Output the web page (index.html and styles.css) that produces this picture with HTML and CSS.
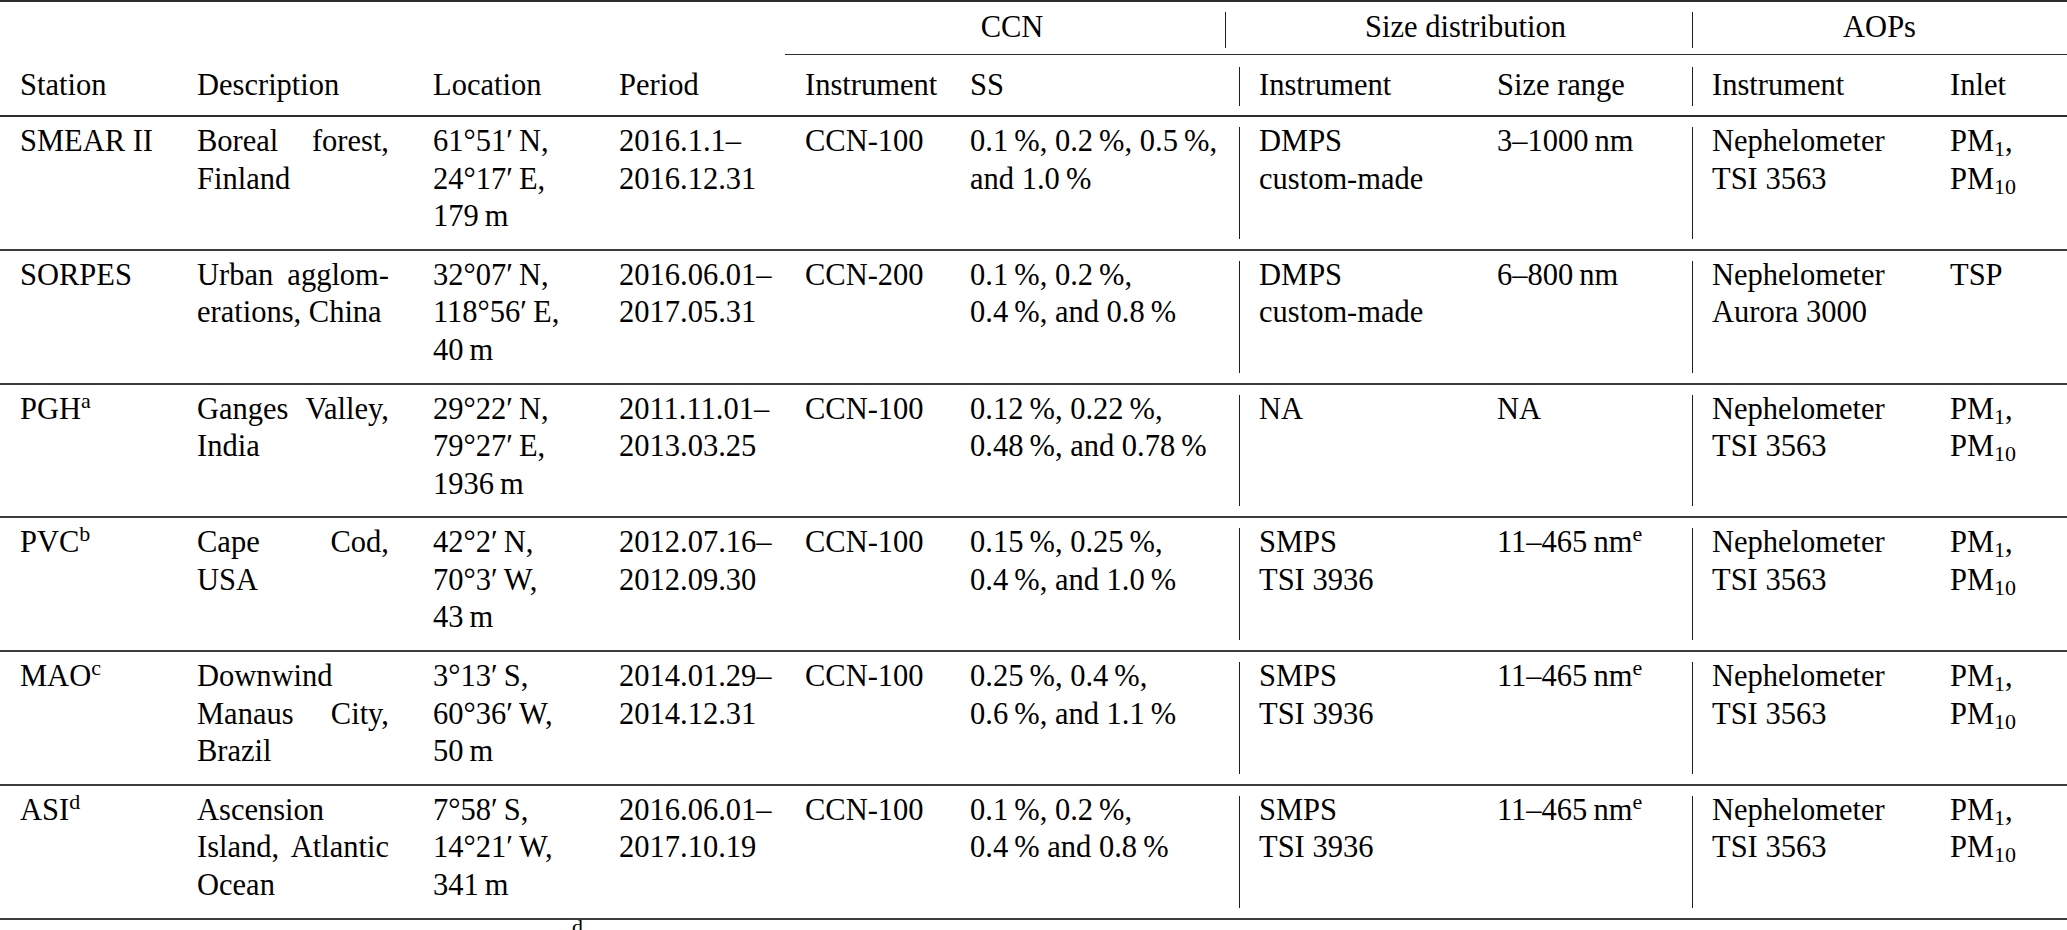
FILE: index.html
```html
<!DOCTYPE html>
<html lang="en">
<head>
<meta charset="utf-8">
<title>Stations table</title>
<link rel="stylesheet" href="styles.css">
</head>
<body>
<table class="tbl">
  <colgroup>
    <col class="c1"><col class="c2"><col class="c3"><col class="c4"><col class="c5">
    <col class="c6"><col class="c7"><col class="c8"><col class="c9"><col class="c10">
  </colgroup>
  <thead>
    <tr class="h1">
      <th></th><th></th><th></th><th></th>
      <th colspan="2" class="grp ccn">CCN</th>
      <th colspan="2" class="grp">Size distribution</th>
      <th colspan="2" class="grp bar">AOPs</th>
    </tr>
    <tr class="h2">
      <th>Station</th><th>Description</th><th>Location</th><th>Period</th>
      <th>Instrument</th><th>SS</th>
      <th class="bar b1">Instrument</th><th>Size range</th>
      <th class="bar b2">Instrument</th><th>Inlet</th>
    </tr>
  </thead>
  <tbody class="body">
    <tr>
      <td>SMEAR II</td>
      <td><span class="ln j"><span>Boreal</span><span>forest,</span></span><span class="ln">Finland</span></td>
      <td><span class="ln">61°51′&#8201;N,</span><span class="ln">24°17′&#8201;E,</span><span class="ln">179&#8201;m</span></td>
      <td><span class="ln">2016.1.1–</span><span class="ln">2016.12.31</span></td>
      <td>CCN-100</td>
      <td><span class="ln">0.1&#8201;%, 0.2&#8201;%, 0.5&#8201;%,</span><span class="ln">and 1.0&#8201;%</span></td>
      <td class="bar b1"><span class="ln">DMPS</span><span class="ln">custom-made</span></td>
      <td>3–1000&#8201;nm</td>
      <td class="bar b2"><span class="ln">Nephelometer</span><span class="ln">TSI 3563</span></td>
      <td><span class="ln">PM<sub>1</sub>,</span><span class="ln">PM<sub>10</sub></span></td>
    </tr>
    <tr>
      <td>SORPES</td>
      <td><span class="ln j"><span>Urban</span><span>agglom-</span></span><span class="ln">erations, China</span></td>
      <td><span class="ln">32°07′&#8201;N,</span><span class="ln">118°56′&#8201;E,</span><span class="ln">40&#8201;m</span></td>
      <td><span class="ln">2016.06.01–</span><span class="ln">2017.05.31</span></td>
      <td>CCN-200</td>
      <td><span class="ln">0.1&#8201;%, 0.2&#8201;%,</span><span class="ln">0.4&#8201;%, and 0.8&#8201;%</span></td>
      <td class="bar b1"><span class="ln">DMPS</span><span class="ln">custom-made</span></td>
      <td>6–800&#8201;nm</td>
      <td class="bar b2"><span class="ln">Nephelometer</span><span class="ln">Aurora 3000</span></td>
      <td>TSP</td>
    </tr>
    <tr>
      <td>PGH<sup>a</sup></td>
      <td><span class="ln j"><span>Ganges</span><span>Valley,</span></span><span class="ln">India</span></td>
      <td><span class="ln">29°22′&#8201;N,</span><span class="ln">79°27′&#8201;E,</span><span class="ln">1936&#8201;m</span></td>
      <td><span class="ln">2011.11.01–</span><span class="ln">2013.03.25</span></td>
      <td>CCN-100</td>
      <td><span class="ln">0.12&#8201;%, 0.22&#8201;%,</span><span class="ln">0.48&#8201;%, and 0.78&#8201;%</span></td>
      <td class="bar b1">NA</td>
      <td>NA</td>
      <td class="bar b2"><span class="ln">Nephelometer</span><span class="ln">TSI 3563</span></td>
      <td><span class="ln">PM<sub>1</sub>,</span><span class="ln">PM<sub>10</sub></span></td>
    </tr>
    <tr>
      <td>PVC<sup>b</sup></td>
      <td><span class="ln j"><span>Cape</span><span>Cod,</span></span><span class="ln">USA</span></td>
      <td><span class="ln">42°2′&#8201;N,</span><span class="ln">70°3′&#8201;W,</span><span class="ln">43&#8201;m</span></td>
      <td><span class="ln">2012.07.16–</span><span class="ln">2012.09.30</span></td>
      <td>CCN-100</td>
      <td><span class="ln">0.15&#8201;%, 0.25&#8201;%,</span><span class="ln">0.4&#8201;%, and 1.0&#8201;%</span></td>
      <td class="bar b1"><span class="ln">SMPS</span><span class="ln">TSI 3936</span></td>
      <td>11–465&#8201;nm<sup>e</sup></td>
      <td class="bar b2"><span class="ln">Nephelometer</span><span class="ln">TSI 3563</span></td>
      <td><span class="ln">PM<sub>1</sub>,</span><span class="ln">PM<sub>10</sub></span></td>
    </tr>
    <tr>
      <td>MAO<sup>c</sup></td>
      <td><span class="ln">Downwind</span><span class="ln j"><span>Manaus</span><span>City,</span></span><span class="ln">Brazil</span></td>
      <td><span class="ln">3°13′&#8201;S,</span><span class="ln">60°36′&#8201;W,</span><span class="ln">50&#8201;m</span></td>
      <td><span class="ln">2014.01.29–</span><span class="ln">2014.12.31</span></td>
      <td>CCN-100</td>
      <td><span class="ln">0.25&#8201;%, 0.4&#8201;%,</span><span class="ln">0.6&#8201;%, and 1.1&#8201;%</span></td>
      <td class="bar b1"><span class="ln">SMPS</span><span class="ln">TSI 3936</span></td>
      <td>11–465&#8201;nm<sup>e</sup></td>
      <td class="bar b2"><span class="ln">Nephelometer</span><span class="ln">TSI 3563</span></td>
      <td><span class="ln">PM<sub>1</sub>,</span><span class="ln">PM<sub>10</sub></span></td>
    </tr>
    <tr>
      <td>ASI<sup>d</sup></td>
      <td><span class="ln">Ascension</span><span class="ln j"><span>Island,</span><span>Atlantic</span></span><span class="ln">Ocean</span></td>
      <td><span class="ln">7°58′&#8201;S,</span><span class="ln">14°21′&#8201;W,</span><span class="ln">341&#8201;m</span></td>
      <td><span class="ln">2016.06.01–</span><span class="ln">2017.10.19</span></td>
      <td>CCN-100</td>
      <td><span class="ln">0.1&#8201;%, 0.2&#8201;%,</span><span class="ln">0.4&#8201;% and 0.8&#8201;%</span></td>
      <td class="bar b1"><span class="ln">SMPS</span><span class="ln">TSI 3936</span></td>
      <td>11–465&#8201;nm<sup>e</sup></td>
      <td class="bar b2"><span class="ln">Nephelometer</span><span class="ln">TSI 3563</span></td>
      <td><span class="ln">PM<sub>1</sub>,</span><span class="ln">PM<sub>10</sub></span></td>
    </tr>
  </tbody>
</table>
<div class="notes"><sup>d</sup></div>
</body>
</html>
```

FILE: styles.css
```css
html, body {
  margin: 0;
  padding: 0;
  background: #ffffff;
}

body {
  color: #000000;
  font-family: "Liberation Serif", "Times New Roman", serif;
  font-size: 30.5px;
  overflow: hidden;
}

.tbl {
  width: 2067px;
  table-layout: fixed;
  border-collapse: separate;
  border-spacing: 0;
  border-top: 2px solid #2e2e2e;
}

.c1 { width: 177px; }
.c2 { width: 236px; }
.c3 { width: 186px; }
.c4 { width: 186px; }
.c5 { width: 165px; }
.c6 { width: 289px; }
.c7 { width: 238px; }
.c8 { width: 215px; }
.c9 { width: 238px; }
.c10 { width: 137px; }

.tbl th,
.tbl td {
  padding: 0 0 0 20px;
  text-align: left;
  font-weight: normal;
  vertical-align: top;
  line-height: 37.5px;
  white-space: nowrap;
  position: relative;
}

.ln {
  display: block;
}

.ln.j {
  display: flex;
  justify-content: space-between;
  width: 192px;
}

.h1 th {
  padding-top: 7px;
  padding-bottom: 7px;
}

.h1 .grp {
  text-align: center;
  padding-left: 0;
  border-bottom: 1.5px solid #2e2e2e;
}

.h2 th {
  padding-top: 12px;
  padding-bottom: 11px;
  border-bottom: 2px solid #2e2e2e;
}

.body td {
  padding-top: 6px;
  padding-bottom: 13.3px;
  border-bottom: 2px solid #3c3c3c;
}

.b1 { padding-left: 22px; }
.b2 { padding-left: 23px; }

.bar::before {
  content: "";
  position: absolute;
  left: 0;
  top: 10px;
  bottom: 10px;
  border-left: 1.5px solid #1e1e1e;
}

.h1 .bar::before {
  top: 10px;
  bottom: 5.5px;
}

.h1 .ccn::after {
  content: "";
  position: absolute;
  right: 13px;
  top: 10px;
  bottom: 5.5px;
  border-left: 1.5px solid #1e1e1e;
}

.h2 .bar::before {
  top: 12.5px;
  bottom: 9.5px;
}

sup,
sub {
  font-size: 0.72em;
  line-height: 0;
}

sup {
  vertical-align: 11px;
}

sub {
  vertical-align: -5px;
}

.notes {
  padding: 7px 0 0 572px;
  font-size: 30.5px;
  line-height: 14px;
}
```
